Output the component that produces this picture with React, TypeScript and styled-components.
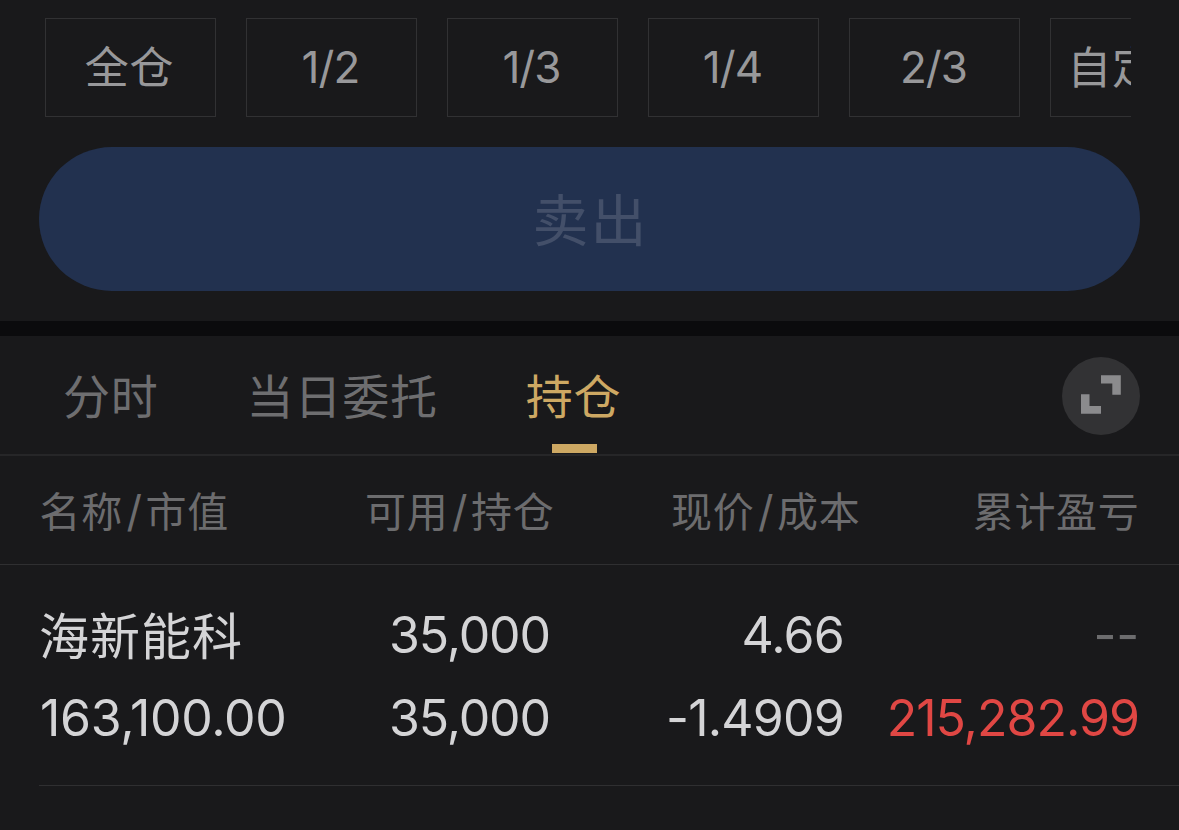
import { useState } from "react";
import styled, { createGlobalStyle } from "styled-components";

const GlobalStyle = createGlobalStyle`
  * {
    box-sizing: border-box;
  }

  body {
    margin: 0;
    background-color: #19191b;
    font-family: Inter, "Noto Sans CJK SC", sans-serif;
  }

  button {
    padding: 0;
    border: none;
    background: none;
    font-family: inherit;
    cursor: pointer;
  }
`

const Page = styled.div`
  width: 1179px;
  height: 830px;
  overflow: hidden;
  background-color: #19191b;
`

const ChipRow = styled.div`
  display: flex;
  gap: 30px;
  margin: 0 48px 0 45px;
  padding-top: 18px;
  overflow: hidden;
`

const Chip = styled.button<{ $hanzi?: boolean; }>`
  display: flex;
  justify-content: center;
  align-items: flex-start;
  flex: 0 0 171px;
  height: 99px;
  padding: ${(props) => props.$hanzi ? "1px 2px 0 0" : "0 2px 0 0"};
  border: 1px solid #313133;
  color: #98989a;
  font-size: 44px;
  line-height: 97px;
  letter-spacing: ${(props) => props.$hanzi ? "0.8px" : "-0.9px"};
  white-space: nowrap;
`

const SellButton = styled.button`
  display: block;
  width: 1101px;
  height: 144px;
  margin: 30px 39px;
  padding: 5px 0 0 2px;
  border-radius: 73px / 72px;
  background-color: #22314f;
  color: #434f69;
  font-size: 56px;
  line-height: 139px;
  letter-spacing: 2px;
`

const Divider = styled.div`
  height: 15px;
  background-color: #0b0b0d;
`

const TabBar = styled.div`
  display: flex;
  align-items: flex-start;
  height: 120px;
  padding: 0 39px 0 63px;
  border-bottom: 2px solid #262628;
`

const Tab = styled.button<{ $active: boolean; }>`
  display: flex;
  flex-direction: column;
  align-items: center;
  height: 117px;
  margin-right: 88px;
  color: ${(props) => props.$active ? "#cda863" : "#6e6e70"};
  font-size: 47px;
  line-height: 122px;
  letter-spacing: 0.8px;

  &::after {
    content: '';
    width: 45px;
    height: 9px;
    margin-top: -14px;
    margin-left: 2px;
    background-color: ${(props) => props.$active ? "#cda863" : "transparent"};
  }
`

const ExpandButton = styled.button`
  display: flex;
  justify-content: center;
  align-items: center;
  width: 78px;
  height: 78px;
  margin: 21px 0 0 auto;
  padding-bottom: 2px;
  border-radius: 50%;
  background-color: #323234;
`

const HeadRow = styled.div`
  display: grid;
  grid-template-columns: 245px 270px 306px 279px;
  height: 109px;
  padding-left: 39.5px;
  border-bottom: 1px solid #2f2f31;
`

const HeadCell = styled.div<{ $left?: boolean; }>`
  text-align: ${(props) => props.$left ? "left" : "right"};
  color: #6c6c6e;
  font-size: 41px;
  line-height: 113px;
  letter-spacing: 0.7px;
  white-space: nowrap;
`

const Slash = styled.span`
  margin: 0 3px 0 3.5px;
  font-size: 43px;
  line-height: 1;
`

const Holding = styled.div`
  display: grid;
  grid-template-columns: 245px 266px 294px 295px;
  grid-template-rows: 83px 83px;
  height: 221px;
  margin-left: 39px;
  padding-top: 29px;
  border-bottom: 1px solid #2f2f31;
`

const Value = styled.div<{ $left?: boolean; $color?: string; $spacing?: number; }>`
  padding-left: ${(props) => props.$left ? "1px" : "0"};
  text-align: ${(props) => props.$left ? "left" : "right"};
  color: ${(props) => props.$color ?? "#d4d4d6"};
  font-size: 50px;
  line-height: 83px;
  letter-spacing: ${(props) => props.$spacing ?? 0}px;
  white-space: nowrap;
`

const StockName = styled(Value)`
  padding-left: 0;
  line-height: 86px;
`

const chips = [
  { label: "全仓", hanzi: true },
  { label: "1/2" },
  { label: "1/3" },
  { label: "1/4" },
  { label: "2/3" },
  { label: "自定义", hanzi: true },
];

const tabs = ["分时", "当日委托", "持仓"];

const heads = [["名称", "市值"], ["可用", "持仓"], ["现价", "成本"], ["累计盈亏"]];

const App = () => {
  const [tab, setTab] = useState<string>("持仓");

  return (
    <Page>
      <GlobalStyle />
      {/* 仓位 */}
      <ChipRow>
        {chips.map((chip) => (
          <Chip key={chip.label} $hanzi={chip.hanzi}>{chip.label}</Chip>
        ))}
      </ChipRow>
      <SellButton>卖出</SellButton>
      <Divider />
      {/* 标签 */}
      <TabBar>
        {tabs.map((name) => (
          <Tab key={name} $active={tab === name} onClick={() => setTab(name)}>{name}</Tab>
        ))}
        <ExpandButton>
          <svg width="40" height="40" viewBox="0 0 40 40" fill="#8b8b8d">
            <path d="M20 0.3H39.800V19.700H31.300V8.500H20Z" />
            <path d="M0 19.300H8.500V31H20V38.700H0Z" />
          </svg>
        </ExpandButton>
      </TabBar>
      {/* 持仓列表 */}
      <HeadRow>
        {heads.map(([first, second], i) => (
          <HeadCell key={first} $left={i === 0}>
            {first}{second && <><Slash>/</Slash>{second}</>}
          </HeadCell>
        ))}
      </HeadRow>
      <Holding>
        <StockName $left $spacing={1}>海新能科</StockName>
        <Value $spacing={-1.1}>35,000</Value>
        <Value $spacing={-0.8}>4.66</Value>
        <Value $color="#6c6c6e" $spacing={-0.2}>--</Value>
        <Value $left $spacing={-0.3}>163,100.00</Value>
        <Value $spacing={-1.1}>35,000</Value>
        <Value $spacing={-0.8}>-1.4909</Value>
        <Value $color="#e04744" $spacing={-1}>215,282.99</Value>
      </Holding>
    </Page>
  )
}

export default App;
